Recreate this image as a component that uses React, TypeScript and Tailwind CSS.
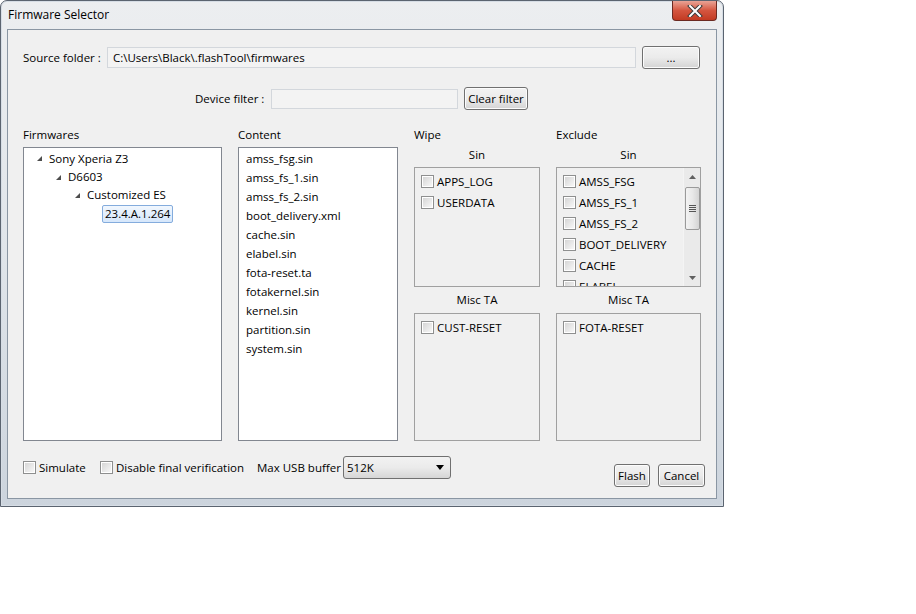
import React from "react";

const font = { fontFamily: '"Open Sans", "Noto Sans", sans-serif' };

const Check = ({ label }: { label: string }) => (
  <div className="flex items-center gap-[3px] h-[21px]">
    <span className="w-[13px] h-[13px] border border-[#8e8f8f] bg-white p-px shrink-0">
      <span className="block w-full h-full bg-gradient-to-br from-[#d6d6d6] to-[#f7f7f7]" />
    </span>
    <span className="whitespace-nowrap">{label}</span>
  </div>
);

const Btn = ({ children, className = "" }: { children: React.ReactNode; className?: string }) => (
  <button
    className={
      "h-[23px] rounded-[3px] border border-[#707070] bg-gradient-to-b from-[#f2f2f2] via-[#ebebeb] to-[#d4d4d4] text-black shadow-[inset_0_0_0_1px_#fcfcfc] " +
      className
    }
  >
    {children}
  </button>
);

const Arrow = () => (
  <svg width="7" height="7" viewBox="0 0 7 7" className="shrink-0">
    <polygon points="6,1 6,6 1,6" fill="#4d4d4d" />
  </svg>
);

const content = [
  "amss_fsg.sin",
  "amss_fs_1.sin",
  "amss_fs_2.sin",
  "boot_delivery.xml",
  "cache.sin",
  "elabel.sin",
  "fota-reset.ta",
  "fotakernel.sin",
  "kernel.sin",
  "partition.sin",
  "system.sin",
];

const exclude = ["AMSS_FSG", "AMSS_FS_1", "AMSS_FS_2", "BOOT_DELIVERY", "CACHE", "ELABEL"];

export default function App() {
  return (
    <div className="w-[916px] h-[614px] bg-white text-[11.5px] text-black" style={font}>
      <div className="w-[724px] h-[507px] flex flex-col rounded-t-[7px] border border-[#5b6470] bg-gradient-to-b from-[#eceef0] via-[#e0e5ea] to-[#ccd4dd] shadow-[0_0_0_1px_#d6dde5_inset]">
        {/* Title bar */}
        <div className="h-[28px] flex items-start justify-between pl-[7px]">
          <div className="pt-[5px] leading-[18px] text-[12px]">Firmware Selector</div>
          <div className="mr-[6px] w-[45px] h-[20px] rounded-b-[4px] border border-t-0 border-[#6b2a22] bg-gradient-to-b from-[#e8a396] via-[#d4553f] to-[#c23a22] flex items-center justify-center">
            <svg width="16" height="12" viewBox="0 0 16 12">
              <path
                d="M3 1 L13 11 M13 1 L3 11"
                stroke="#3d3d3d"
                strokeWidth="4"
                strokeLinecap="square"
              />
              <path
                d="M3 1 L13 11 M13 1 L3 11"
                stroke="#ffffff"
                strokeWidth="2"
                strokeLinecap="square"
              />
            </svg>
          </div>
        </div>

        {/* Client area */}
        <div className="mx-[6px] mb-[7px] flex-1 border border-[#8a96a3] bg-[#f0f0f0] px-[15px] flex flex-col">
          {/* Source folder */}
          <div className="mt-[16px] h-[23px] flex items-center">
            <div className="w-[84px]">Source folder :</div>
            <div className="w-[529px] h-[21px] border border-[#d3d7dc] bg-[#f3f3f3] pl-[5px] leading-[19px]">
              C:\Users\Black\.flashTool\firmwares
            </div>
            <Btn className="ml-[6px] w-[58px] leading-[10px]">...</Btn>
          </div>

          {/* Device filter */}
          <div className="mt-[18px] h-[23px] flex items-center">
            <div className="ml-[172px] w-[76px]">Device filter :</div>
            <div className="w-[187px] h-[20px] border border-[#d3d7dc] bg-[#f3f3f3]" />
            <Btn className="ml-[6px] w-[64px]">Clear filter</Btn>
          </div>

          {/* Columns */}
          <div className="mt-[18px] flex gap-[16px]">
            <div className="w-[199px] flex flex-col">
              <div className="h-[19px] leading-[14px]">Firmwares</div>
              <div className="h-[294px] border border-[#828790] bg-white pt-[1px]">
                <div className="h-[19px] flex items-center pl-[12px] gap-[6px]">
                  <Arrow />
                  <span>Sony Xperia Z3</span>
                </div>
                <div className="h-[18px] flex items-center pl-[31px] gap-[6px]">
                  <Arrow />
                  <span>D6603</span>
                </div>
                <div className="h-[18px] flex items-center pl-[50px] gap-[6px]">
                  <Arrow />
                  <span>Customized ES</span>
                </div>
                <div className="h-[19px] flex items-center pl-[78px]">
                  <span className="h-[18px] px-[2px] leading-[16px] border border-[#84acdd] rounded-[2px] bg-gradient-to-b from-[#f1f7fe] to-[#d6e7fb]">
                    23.4.A.1.264
                  </span>
                </div>
              </div>
            </div>

            <div className="w-[160px] flex flex-col">
              <div className="h-[19px] leading-[14px]">Content</div>
              <div className="h-[294px] border border-[#828790] bg-white pt-[1px] pl-[7px]">
                {content.map((c) => (
                  <div key={c} className="h-[19px] leading-[19px]">
                    {c}
                  </div>
                ))}
              </div>
            </div>

            <div className="w-[126px] flex flex-col">
              <div className="h-[19px] leading-[14px]">Wipe</div>
              <div className="h-[20px] leading-[16px] text-center">Sin</div>
              <div className="h-[120px] border border-[#a0a0a0] pt-[3px] pl-[6px]">
                <Check label="APPS_LOG" />
                <Check label="USERDATA" />
              </div>
              <div className="h-[26px] pt-[6px] leading-[14px] text-center">Misc TA</div>
              <div className="h-[128px] border border-[#a0a0a0] pt-[3px] pl-[6px]">
                <Check label="CUST-RESET" />
              </div>
            </div>

            <div className="w-[145px] flex flex-col">
              <div className="h-[19px] leading-[14px]">Exclude</div>
              <div className="h-[20px] leading-[16px] text-center">Sin</div>
              <div className="h-[120px] border border-[#a0a0a0] flex overflow-hidden">
                <div className="flex-1 pt-[3px] pl-[6px]">
                  {exclude.map((e) => (
                    <Check key={e} label={e} />
                  ))}
                </div>
                <div className="w-[17px] bg-[#eaeaea] flex flex-col items-center border-l border-[#f4f4f4]">
                  <div className="h-[17px] flex items-center justify-center">
                    <svg width="7" height="4" viewBox="0 0 7 4">
                      <polygon points="3.5,0 7,4 0,4" fill="#606060" />
                    </svg>
                  </div>
                  <div className="w-[15px] h-[43px] mt-[2px] rounded-[2px] border border-[#9a9a9a] bg-gradient-to-r from-[#f3f3f3] via-[#e8e8e8] to-[#d4d4d4] flex flex-col items-center justify-center gap-[1px]">
                    <span className="w-[7px] h-px bg-[#555]" />
                    <span className="w-[7px] h-px bg-[#555]" />
                    <span className="w-[7px] h-px bg-[#555]" />
                    <span className="w-[7px] h-px bg-[#555]" />
                  </div>
                  <div className="flex-1" />
                  <div className="h-[17px] flex items-center justify-center">
                    <svg width="7" height="4" viewBox="0 0 7 4">
                      <polygon points="0,0 7,0 3.5,4" fill="#606060" />
                    </svg>
                  </div>
                </div>
              </div>
              <div className="h-[26px] pt-[6px] leading-[14px] text-center">Misc TA</div>
              <div className="h-[128px] border border-[#a0a0a0] pt-[3px] pl-[6px]">
                <Check label="FOTA-RESET" />
              </div>
            </div>
          </div>

          {/* Bottom row */}
          <div className="mt-[15px] flex items-start">
            <div className="mt-[1px] flex items-center">
              <div className="w-[77px]">
                <Check label="Simulate" />
              </div>
              <div className="w-[157px]">
                <Check label="Disable final verification" />
              </div>
              <div className="w-[86px] whitespace-nowrap">Max USB buffer</div>
            </div>
            <div className="w-[108px] h-[23px] rounded-[3px] border border-[#707070] bg-gradient-to-b from-[#f2f2f2] via-[#ebebeb] to-[#d6d6d6] flex items-center justify-between pl-[3px] pr-[6px]">
              <span>512K</span>
              <svg width="8" height="5" viewBox="0 0 8 5">
                <polygon points="0,0 8,0 4,5" fill="#000" />
              </svg>
            </div>
            <div className="ml-auto mt-[8px] mr-[-4px] flex gap-[8px]">
              <Btn className="w-[36px]">Flash</Btn>
              <Btn className="w-[47px]">Cancel</Btn>
            </div>
          </div>
        </div>
      </div>
    </div>
  );
}
